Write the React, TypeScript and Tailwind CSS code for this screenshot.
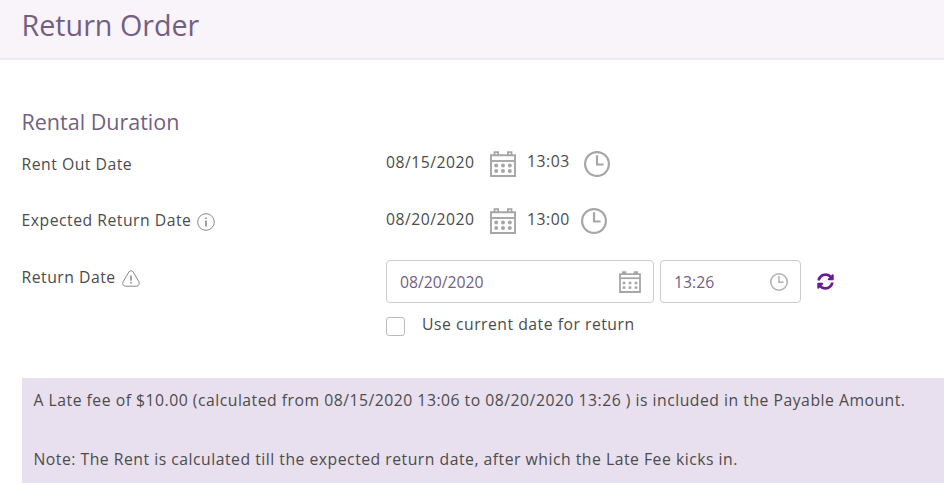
import React, { useState } from "react";

interface IconProps {
  className?: string;
}

const CalendarIcon: React.FC<IconProps> = ({ className }) => (
  <svg viewBox="0 0 26 26" fill="none" className={className}>
    <path d="M1 4.3h24v20.7H1z" stroke="currentColor" strokeWidth="1.9" />
    <path d="M1 10h24" stroke="currentColor" strokeWidth="1.9" />
    <path d="M4.5 4.5V1.2h3.6v3.3M17.9 4.5V1.2h3.6v3.3" stroke="currentColor" strokeWidth="1.8" />
    {[14.6, 20].map((cy) =>
      [6.2, 13, 19.8].map((cx) => (
        <circle key={`${cx}-${cy}`} cx={cx} cy={cy} r="2" fill="currentColor" />
      ))
    )}
  </svg>
);

const SmallCalendarIcon: React.FC<IconProps> = ({ className }) => (
  <svg viewBox="0 0 22 22" fill="none" className={className}>
    <path d="M1 3.2h20v17.8H1z" stroke="currentColor" strokeWidth="1.8" />
    <path d="M1 7.2h20" stroke="currentColor" strokeWidth="1.8" />
    <path d="M3.7 4V1h2.8V4M15.5 4V1h2.8V4" fill="currentColor" stroke="currentColor" strokeWidth="1.6" />
    {[12, 16.6].map((cy) =>
      [5, 11, 17].map((cx) => (
        <rect key={`${cx}-${cy}`} x={cx - 1.3} y={cy - 1.3} width="2.6" height="2.6" fill="currentColor" />
      ))
    )}
  </svg>
);

const ClockIcon: React.FC<IconProps> = ({ className }) => (
  <svg viewBox="0 0 26 26" fill="none" stroke="currentColor" strokeWidth="2.2" className={className}>
    <circle cx="13" cy="13" r="11.9" />
    <path d="M13 4.3v9.2h6.6" />
  </svg>
);

const InfoIcon: React.FC<IconProps> = ({ className }) => (
  <svg viewBox="0 0 18 18" fill="none" stroke="currentColor" className={className}>
    <circle cx="9" cy="9" r="8.3" strokeWidth="1" />
    <path d="M9 7.4v6" strokeWidth="1.6" />
    <path d="M9 4.4v1.6" strokeWidth="1.6" />
  </svg>
);

const WarningIcon: React.FC<IconProps> = ({ className }) => (
  <svg viewBox="0 0 18 17" fill="none" stroke="currentColor" className={className}>
    <path
      d="M6.8 2c1.1-1.8 3.3-1.8 4.4 0l5.7 9.8c1.1 2-.1 4.4-2.3 4.4H3.4c-2.2 0-3.4-2.4-2.3-4.4z"
      strokeWidth="1"
    />
    <path d="M9 5.4v5.4M9 12v1.5" strokeWidth="1.5" />
  </svg>
);

const RefreshIcon: React.FC<IconProps> = ({ className }) => (
  <svg viewBox="0 0 512 512" fill="currentColor" className={className}>
    <path d="M370.7 133.3C339.5 104 298.9 88 255.8 88c-77.5.1-144.3 53.2-162.8 126.9-1.3 5.4-6.1 9.1-11.7 9.1H24.1c-7.5 0-13.2-6.8-11.8-14.2C33.9 94.9 134.8 8 256 8c66.4 0 126.8 26.1 171.3 68.7L463 41C478.1 25.9 504 36.6 504 57.9V192c0 13.3-10.7 24-24 24H345.9c-21.4 0-32.1-25.9-17-41zM32 296h134.1c21.4 0 32.1 25.9 17 41l-41.8 41.8c31.3 29.3 71.8 45.3 114.9 45.2 77.4-.1 144.3-53.1 162.8-126.8 1.3-5.4 6.1-9.1 11.7-9.1h57.3c7.5 0 13.2 6.8 11.8 14.2C478.1 417.1 377.2 504 256 504c-66.4 0-126.8-26.1-171.3-68.7L49 471c-15.1 15.1-41 4.4-41-16.9V320c0-13.3 10.7-24 24-24z" />
  </svg>
);

const App: React.FC = () => {
  const [date, setDate] = useState("08/20/2020");
  const [time, setTime] = useState("13:26");
  const [useCurrent, setUseCurrent] = useState(false);

  return (
    <div className="h-[489px] overflow-hidden bg-white font-['Open_Sans',sans-serif] text-[15.75px] leading-6 tracking-[0.5px] text-[#4c4c4c]">
      <header className="h-[60px] border-b-2 border-[#efe8f3] bg-[#f8f4fa] pl-[21.5px] pt-[5px]">
        <h1 className="text-[28.7px] leading-[39px] tracking-normal text-[#735f82]">Return Order</h1>
      </header>

      <main className="pl-[21.5px] pt-[46px]">
        <h2 className="h-[46px] text-[21.5px] leading-8 tracking-normal text-[#735f82]">Rental Duration</h2>

        {/* Rent out */}
        <div className="flex h-[56px] items-start">
          <div className="w-[364.5px]">Rent Out Date</div>
          <div className="-mt-[2px] w-[104px]">08/15/2020</div>
          <CalendarIcon className="-mt-[1px] size-[26px] text-[#a6a6a6]" />
          <div className="-mt-[3px] ml-[11px] w-[57px]">13:03</div>
          <ClockIcon className="-mt-[1px] size-[26px] text-[#a6a6a6]" />
        </div>

        {/* Expected return */}
        <div className="flex h-[57px] items-start">
          <div className="flex w-[364.5px] items-center gap-1.5">
            Expected Return Date
            <InfoIcon className="mt-[3px] size-[18px] text-[#888]" />
          </div>
          <div className="-mt-[1px] w-[104px]">08/20/2020</div>
          <CalendarIcon className="size-[26px] text-[#a6a6a6]" />
          <div className="-mt-[1px] ml-[11px] w-[54px]">13:00</div>
          <ClockIcon className="size-[26px] text-[#a6a6a6]" />
        </div>

        {/* Return */}
        <div className="flex h-[112.5px] items-start">
          <div className="flex w-[364.5px] items-center gap-1.5">
            Return Date
            <WarningIcon className="mt-[3px] h-[17px] w-[18px] text-[#888]" />
          </div>
          <div className="-mt-[5px]">
            <div className="flex items-center">
              <label className="flex h-[43px] w-[268px] items-center justify-between rounded border border-[#ccc] pl-[13px] pr-[12px]">
                <input
                  value={date}
                  onChange={(e) => setDate(e.target.value)}
                  className="w-[150px] tracking-normal text-[#735f82] outline-none"
                />
                <SmallCalendarIcon className="size-[22px] text-[#a6a6a6]" />
              </label>
              <label className="ml-[6px] flex h-[43px] w-[141px] items-center justify-between rounded border border-[#ccc] pl-[13px] pr-[12px]">
                <input
                  value={time}
                  onChange={(e) => setTime(e.target.value)}
                  className="w-[80px] tracking-normal text-[#735f82] outline-none"
                />
                <ClockIcon className="size-[18px] text-[#b0b0b0]" />
              </label>
              <button className="ml-[16px]" aria-label="Reset">
                <RefreshIcon className="size-[17px] text-[#6a1b9a]" />
              </button>
            </div>
            <label className="mt-[9px] flex items-start">
              <input
                type="checkbox"
                checked={useCurrent}
                onChange={(e) => setUseCurrent(e.target.checked)}
                className="mt-[5px] size-[19px] appearance-none rounded-[3px] border border-[#bbb]"
              />
              <span className="ml-[17px]">Use current date for return</span>
            </label>
          </div>
        </div>

        {/* Late fee notice */}
        <div className="h-[105px] bg-[#e8e0ee] pl-[12px] pt-[10px]">
          <p className="mb-[35px]">
            A Late fee of $10.00 (calculated from 08/15/2020 13:06 to 08/20/2020 13:26 ) is included in the Payable Amount.
          </p>
          <p>Note: The Rent is calculated till the expected return date, after which the Late Fee kicks in.</p>
        </div>
      </main>
    </div>
  );
};

export default App;
